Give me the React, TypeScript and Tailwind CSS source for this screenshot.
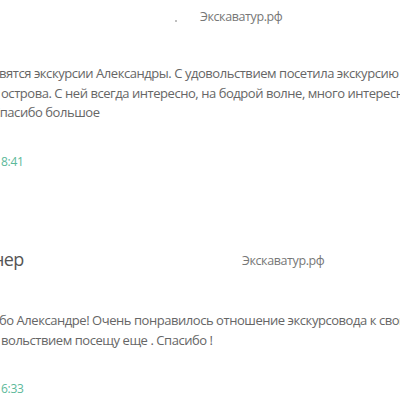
const Review = ({
  name,
  source,
  lines,
  time,
}: {
  name: string;
  source: string;
  lines: { text: string; indent: string }[];
  time: string;
}) => {
  return (
    <div className="flex flex-col">
      <div className="flex items-center h-[34px]">
        <span className="shrink-0 w-[24px] -ml-[7px] text-[18px] text-[#555] leading-none tracking-[-0.6px]">{name}</span>
        <span className="ml-[225px] mt-[6px] text-[12.5px] text-[#777] tracking-[-0.4px]">{source}</span>
      </div>
      <div className="mt-[34px] text-[13px] leading-[20px] text-[#666] whitespace-nowrap tracking-[-0.45px]">
        {lines.map((l, i) => (
          <div key={i} className={l.indent}>
            {l.text}
          </div>
        ))}
      </div>
      <div className="mt-[31px] ml-[1px] text-[12px] leading-[16px] text-[#5cb99a] tracking-[-0.3px]">{time}</div>
    </div>
  );
};

export default function App() {
  return (
    <div
      className="w-[400px] h-[400px] overflow-hidden bg-white"
      style={{ fontFamily: '"Open Sans", "Noto Sans", sans-serif' }}
    >
      <div className="flex flex-col">
        <div className="flex items-center h-[34px]">
          <span className="ml-[175px] w-[2px] h-[2px] rounded-full bg-[#aaa] mt-[8px]" />
          <span className="ml-[23px] text-[12.5px] text-[#777] tracking-[-0.4px]">Экскаватур.рф</span>
        </div>
        <div className="mt-[30px] text-[13px] leading-[19.5px] text-[#666] whitespace-nowrap tracking-[-0.45px]">
          <div className="-ml-[1px]">вятся экскурсии Александры. С удовольствием посетила экскурсию</div>
          <div className="ml-[1px]">острова. С ней всегда интересно, на бодрой волне, много интересного</div>
          <div className="-ml-[8px]">Спасибо большое</div>
        </div>
        <div className="mt-[31px] ml-[1px] text-[12px] leading-[16px] text-[#5cb99a] tracking-[-0.3px]">8:41</div>
      </div>
      <div className="mt-[72px]">
        <Review
          name="нер"
          source="Экскаватур.рф"
          lines={[
            { text: "бо Александре! Очень понравилось отношение экскурсовода к своим", indent: "-ml-[1px]" },
            { text: "вольствием посещу еще . Спасибо !", indent: "ml-[1px]" },
          ]}
          time="6:33"
        />
      </div>
    </div>
  );
}
